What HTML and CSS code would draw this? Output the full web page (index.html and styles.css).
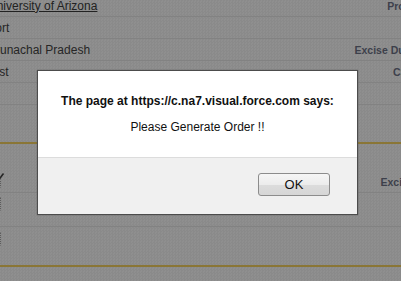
FILE: index.html
```html
<!DOCTYPE html>
<html lang="en">
<head>
  <meta charset="UTF-8">
  <title>Order</title>
  <link rel="stylesheet" href="styles.css">
</head>
<body>
  <div class="page">
    <!-- detail block -->
    <div class="block">
      <div class="row"><span class="value"><a class="link">University of Arizona</a></span><span class="label">Prod.</span></div>
      <div class="row"><span class="value">Fort</span><span class="label"></span></div>
      <div class="row"><span class="value">Arunachal Pradesh</span><span class="label">Excise Duty</span></div>
      <div class="row"><span class="value">Dist</span><span class="label">CST</span></div>
      <div class="row"><span class="value"></span><span class="label"></span></div>
    </div>

    <!-- line items -->
    <div class="block items">
      <div class="row head">
        <span class="value">
          <svg class="tick" width="6" height="7" viewBox="0 0 6 7"><path d="M0 6.5 L4.5 0.5" stroke="#262626" stroke-width="1.6" fill="none"/></svg>
          <span class="box"></span>
        </span>
        <span class="label label-items">Excise Duty</span>
      </div>
      <div class="row item"><span class="value"><span class="box"></span></span></div>
      <div class="row item tall"><span class="value"><span class="box"></span></span></div>
    </div>
  </div>

  <!-- alert -->
  <div class="dialog">
    <div class="dialog-body">
      <p class="dialog-title">The page at https://c.na7.visual.force.com says:</p>
      <p class="dialog-msg">Please Generate Order !!</p>
    </div>
    <div class="dialog-foot">
      <button class="ok-btn">OK</button>
    </div>
  </div>
</body>
</html>
```

FILE: styles.css
```css
/* page under the overlay */
body {
  margin: 0;
  height: 281px;
  overflow: hidden;
  font-family: "Liberation Sans", Arial, sans-serif;
  background-color: #8d8d8d;
  background-image: repeating-conic-gradient(#8a8a8a 0 25%, #8f8f8f 0 50%);
  background-size: 3px 3px;
  color: #262626;
}
.page {
  margin-top: -5px;
  width: 480px;
}
.block {
  padding-bottom: 37px;
}
.row {
  display: flex;
  height: 21px;
  border-bottom: 1px solid #828282;
  align-items: center;
}
.value {
  flex: 0 0 300px;
  margin-left: -12px;
  font-size: 12px;
  white-space: nowrap;
}
.link {
  color: #222;
  text-decoration: underline;
}
.label {
  flex: 0 0 126px;
  text-align: right;
  font-size: 10.5px;
  font-weight: bold;
  color: #3d404b;
  white-space: nowrap;
}
/* line items */
.items {
  border-top: 2px solid #8a7636;
  border-bottom: 2px solid #8a7636;
  padding-bottom: 0;
}
.head {
  height: 48px;
  align-items: flex-end;
}
.head .label-items {
  flex-basis: 152px;
  padding-bottom: 4px;
}
.head .value {
  position: relative;
  height: 48px;
}
.tick {
  position: absolute;
  left: 11px;
  top: 29px;
}
.box {
  display: block;
  width: 12px;
  height: 12px;
  border: 1px dotted #5c5c5c;
  border-left: none;
  border-top-color: transparent;
  border-bottom-color: transparent;
}
.head .box {
  position: absolute;
  left: 0;
  top: 35px;
  height: 7px;
}
.item {
  height: 33px;
  align-items: flex-start;
}
.item .box {
  margin-top: 4px;
}
.item.tall {
  height: 38px;
  border-bottom: none;
}
.item.tall .box {
  margin-top: 5px;
}
/* alert dialog */
.dialog {
  position: absolute;
  left: 37px;
  top: 70px;
  width: 319px;
  border: 1px solid #4c4c4c;
  box-shadow: 0 0 1px #555;
  background: #f0f0f0;
  font-family: "Liberation Sans", Arial, sans-serif;
  font-size: 12px;
  color: #111;
}
.dialog-body {
  background: #fff;
  height: 85px;
  border-bottom: 1px solid #dcdcdc;
  text-align: center;
  padding-top: 1px;
}
.dialog-title {
  margin: 22px 0 0;
  font-weight: bold;
}
.dialog-msg {
  margin: 12px 0 0;
}
.dialog-foot {
  height: 56px;
  display: flex;
  justify-content: flex-end;
  align-items: flex-start;
  padding-right: 27px;
}
.ok-btn {
  margin-top: 15px;
  width: 72px;
  height: 23px;
  border: 1px solid #8c8c8c;
  border-radius: 3px;
  background: linear-gradient(#f6f6f6, #ececec 50%, #dcdcdc 51%, #d6d6d6);
  font-family: "Liberation Sans", Arial, sans-serif;
  font-size: 13px;
  color: #111;
  padding: 0;
}
```
